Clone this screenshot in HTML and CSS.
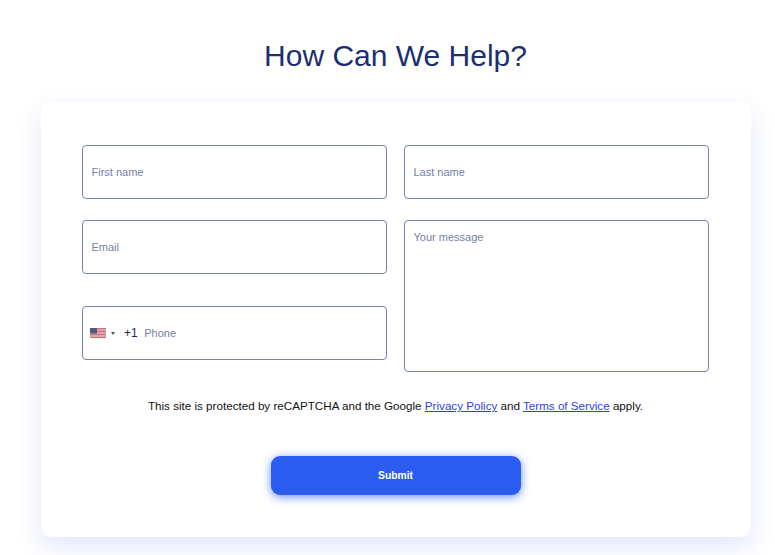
FILE: index.html
```html
<!DOCTYPE html>
<html lang="en">
<head>
    <meta charset="UTF-8">
    <title>How Can We Help?</title>
    <link rel="stylesheet" href="styles.css">
</head>
<body>
    <h1>How Can We Help?</h1>
    <div class="card">
        <form class="form-grid">
            <div class="field">First name</div>
            <div class="field">Last name</div>
            <div class="left-stack">
                <div class="field">Email</div>
                <div class="field phone">
                    <svg class="flag" viewBox="0 0 16 10" width="16" height="10">
                        <rect width="16" height="10" fill="#efdcde"/>
                        <path d="M0 0.5h16M0 2h16M0 3.5h16M0 5h16M0 6.5h16M0 8h16M0 9.5h16" stroke="#cc6e76" stroke-width="1"/>
                        <rect width="7" height="5.5" fill="#55557f"/>
                    </svg>
                    <span class="caret"></span>
                    <span class="dial">+1</span>
                    <span>Phone</span>
                </div>
            </div>
            <div class="field message">Your message</div>
        </form>
        <p class="notice">This site is protected by reCAPTCHA and the Google <a href="#">Privacy Policy</a> and <a href="#">Terms of Service</a> apply.</p>
        <button class="submit" type="button">Submit</button>
    </div>
</body>
</html>
```

FILE: styles.css
```css
body {
    margin: 0;
    height: 555px;
    overflow: hidden;
    background: #fff;
    font-family: "Liberation Sans", Arial, sans-serif;
}

h1 {
    width: 709px;
    height: 64px;
    box-sizing: border-box;
    margin: 0 0 0 41px;
    padding-top: 38px;
    line-height: 35px;
    text-align: center;
    font-size: 30px;
    font-weight: 400;
    color: #1b2f73;
}

.card {
    width: 710px;
    height: 435px;
    box-sizing: border-box;
    margin: 38px 0 0 41px;
    padding: 43px 42px 0 41px;
    background: #fff;
    border-radius: 10px;
    box-shadow: 0 10px 25px rgba(60, 90, 240, 0.15);
}

.form-grid {
    display: grid;
    grid-template-columns: 305px 305px;
    column-gap: 17px;
    row-gap: 21px;
}

.field {
    display: flex;
    align-items: center;
    height: 54px;
    box-sizing: border-box;
    padding: 0 8.5px;
    border: 1px solid #7282b4;
    border-radius: 4px;
    font-size: 11px;
    color: #7480a8;
}

.left-stack {
    display: flex;
    flex-direction: column;
    gap: 32px;
}

.phone {
    padding-left: 7px;
}

.message {
    height: 152px;
    align-items: flex-start;
    padding-top: 10px;
}

.flag {
    margin-right: 5px;
}

.caret {
    width: 0;
    height: 0;
    margin-right: 9px;
    border-left: 2px solid transparent;
    border-right: 2px solid transparent;
    border-top: 3px solid #555;
}

.dial {
    margin-right: 6.5px;
    font-size: 12px;
    color: #1b2450;
}

.notice {
    margin: 26px 0 0;
    line-height: 16px;
    text-align: center;
    font-size: 11.65px;
    color: #111;
}

.notice a {
    color: #2b44e0;
}

.submit {
    display: block;
    width: 250px;
    height: 39px;
    margin: 42px auto 0;
    padding: 0 0 1px;
    border: 0;
    border-radius: 9px;
    background: #2b5cf0;
    box-shadow: 0 2px 10px rgba(43, 92, 240, 0.7);
    font-family: inherit;
    font-size: 10.3px;
    font-weight: 700;
    color: #fff;
}
```
